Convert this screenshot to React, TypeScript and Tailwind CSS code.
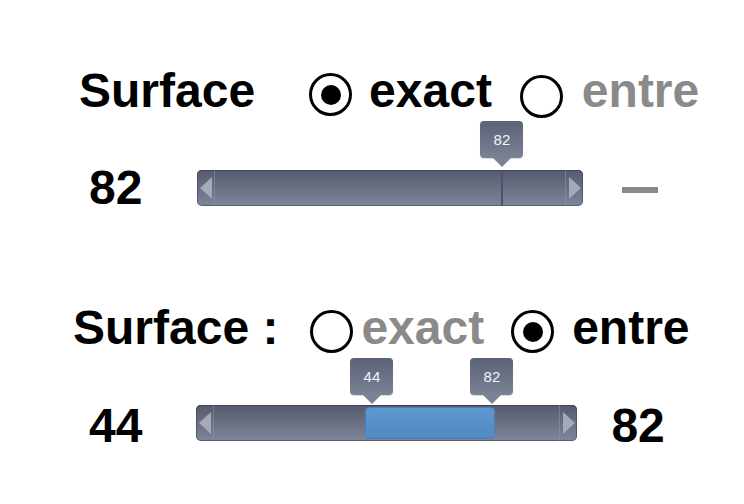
import React from "react";

function Radio({ checked, cls }: { checked: boolean; cls: string }) {
  return (
    <div
      className={
        "flex h-[43px] w-[43px] shrink-0 items-center justify-center rounded-full border-[3.5px] border-black bg-white " +
        cls
      }
    >
      {checked && <div className="h-[20px] w-[20px] rounded-full bg-black" />}
    </div>
  );
}

function Tip({ label, cls }: { label: string; cls: string }) {
  return (
    <div className={"absolute flex flex-col items-center " + cls}>
      <div className="flex h-[37px] w-[43px] items-center justify-center rounded-[4px] bg-gradient-to-b from-[#5c6275] to-[#7c8295] text-[15px] font-normal leading-none text-[#f2f3f6] shadow-[0_1px_1px_rgba(0,0,0,0.15)]">
        {label}
      </div>
      <div className="h-0 w-0 border-x-[9px] border-t-[9px] border-x-transparent border-t-[#7c8295]" />
    </div>
  );
}

function Track({ cls, children }: { cls: string; children?: React.ReactNode }) {
  return (
    <div
      className={
        "relative flex h-[36px] shrink-0 overflow-visible rounded-[5px] bg-gradient-to-b from-[#555b6c] to-[#80869a] shadow-[inset_0_1px_0_#3f4452,inset_0_0_0_1px_rgba(58,62,76,0.55)] " +
        cls
      }
    >
      <div className="flex w-[18px] items-center justify-center border-r border-[#8c91a2]/60">
        <svg width="12" height="22" viewBox="0 0 12 22">
          <polygon points="12,0 0,11 12,22" fill="#a6aab8" />
        </svg>
      </div>
      <div className="flex-1" />
      <div className="flex w-[18px] items-center justify-center border-l border-[#8c91a2]/60">
        <svg width="12" height="22" viewBox="0 0 12 22">
          <polygon points="0,0 12,11 0,22" fill="#a6aab8" />
        </svg>
      </div>
      {children}
    </div>
  );
}

export default function App() {
  return (
    <div
      className="flex h-[504px] w-[744px] flex-col bg-white text-black"
      style={{ fontFamily: '"Liberation Sans", Arial, sans-serif' }}
    >
      {/* Row A */}
      <div className="mt-[67px] flex h-[48px] items-start pl-[79px] text-[48px] font-bold leading-[48px]">
        <span>Surface</span>
        <Radio checked cls="ml-[54px] mt-[6px]" />
        <span className="ml-[17px]">exact</span>
        <Radio checked={false} cls="ml-[28px] mt-[8px]" />
        <span className="ml-[19px] text-[#8a8a8a]">entre</span>
      </div>

      {/* Row B */}
      <div className="mt-[49px] flex h-[48px] items-start pl-[89px] text-[48px] font-bold leading-[48px]">
        <span>82</span>
        <Track cls="ml-[55px] mt-[6px] w-[386px]">
          <div className="absolute left-[304px] top-0 h-[36px] w-[2px] bg-[#3f5876]" />
          <Tip label="82" cls="left-[283px] top-[-49px]" />
        </Track>
        <div className="ml-[39px] mt-[23px] h-[6px] w-[36px] bg-[#8a8a8a]" />
      </div>

      {/* Row C */}
      <div className="mt-[92px] flex h-[48px] items-start pl-[73px] text-[48px] font-bold leading-[48px]">
        <span>Surface :</span>
        <Radio checked={false} cls="ml-[32px] mt-[6px]" />
        <span className="ml-[8px] text-[#8a8a8a]">exact</span>
        <Radio checked cls="ml-[27px] mt-[6px]" />
        <span className="ml-[18px]">entre</span>
      </div>

      {/* Row D */}
      <div className="mt-[50px] flex h-[48px] items-start pl-[89px] text-[48px] font-bold leading-[48px]">
        <span>44</span>
        <Track cls="ml-[54px] mt-[3px] w-[381px]">
          <div className="absolute left-[169px] top-[2px] h-[32px] w-[130px] rounded-[4px] border border-[#4b7fb6] bg-gradient-to-b from-[#5e96cf] to-[#5189c3]" />
          <Tip label="44" cls="left-[154px] top-[-47px]" />
          <Tip label="82" cls="left-[274px] top-[-47px]" />
        </Track>
        <span className="ml-[34px]">82</span>
      </div>
    </div>
  );
}
